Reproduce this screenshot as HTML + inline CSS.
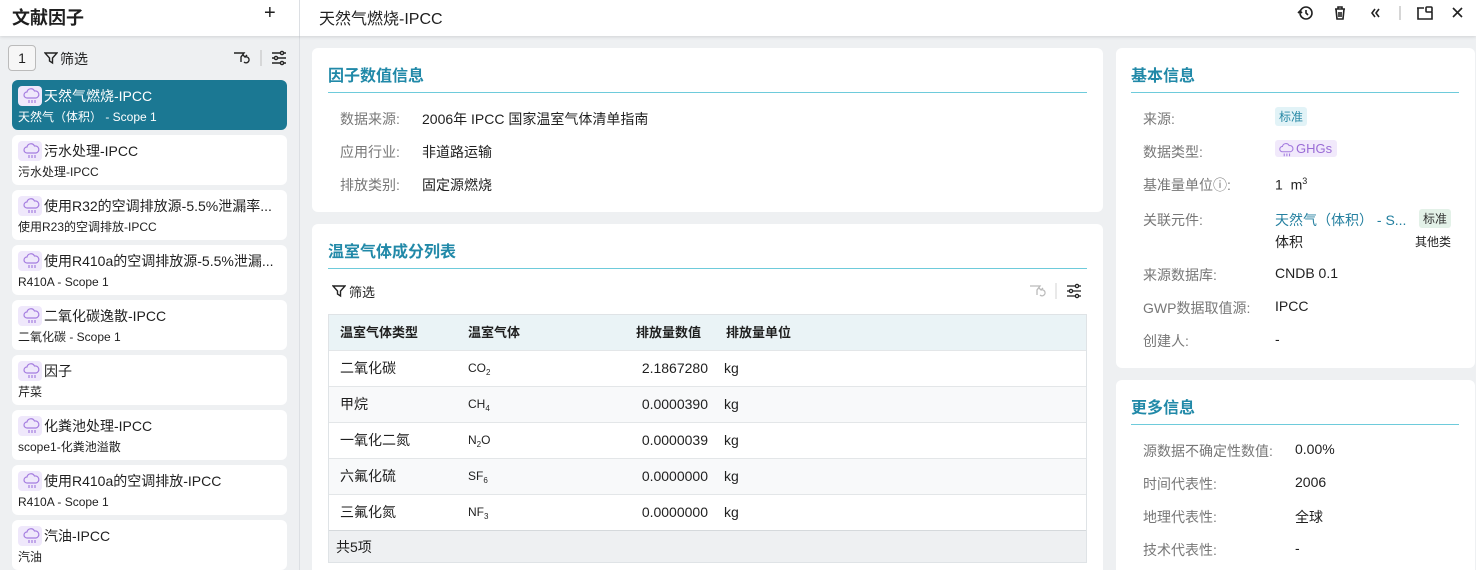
<!DOCTYPE html>
<html><head><meta charset="utf-8">
<style>
*{box-sizing:border-box;margin:0;padding:0}
html,body{width:1476px;height:570px;overflow:hidden}
body{background:#eef0f2;font-family:"Liberation Sans","Noto Sans CJK SC",sans-serif;color:#1f1f1f;position:relative;font-size:14px}
.abs{position:absolute}
.top{left:0;top:0;width:1476px;height:36px;background:#fff;box-shadow:0 1px 3px rgba(0,0,0,.12);z-index:2}
.side{left:0;top:0;width:300px;height:570px;background:#eef0f2;border-right:1px solid #dcdfe3}
.item{position:absolute;left:12px;width:275px;height:50px;background:#fff;border-radius:6px}
.item.sel{background:#1b7893;color:#fff}
.ic{position:absolute;left:6px;top:6px;width:24px;height:20px;background:#efe8fb;border-radius:4px}
.item .t{position:absolute;left:32px;top:6px;font-size:14px;white-space:nowrap;line-height:20px}
.item .s{position:absolute;left:6px;top:28px;font-size:12px;line-height:18px;white-space:nowrap}
.card{position:absolute;background:#fff;border-radius:6px}
.h{position:absolute;font-size:16px;font-weight:bold;color:#2189a8}
.line{position:absolute;height:1px;background:#6ecbdb}
.lab{position:absolute;color:#777;font-size:14px;white-space:nowrap}
.val{position:absolute;color:#1f1f1f;font-size:14px;white-space:nowrap}
.tb{position:absolute;left:328px;top:314px;width:759px;border:1px solid #dfe3e6;overflow:hidden}
.row{position:absolute;left:0;width:757px;height:36px;border-top:1px solid #e3e6e8;font-size:14px}
.row span{position:absolute;top:0;height:35px;line-height:35px;white-space:nowrap}
.f{font-size:12px}
sub{font-size:8px;vertical-align:-3px;line-height:0}
</style></head><body>
<div class="abs side"></div>
<div class="abs top"></div>
<div class="abs" style="left:299px;top:0;width:1px;height:36px;background:#dcdfe3;z-index:3"></div>
<div class="abs" style="left:12px;top:4px;font-size:18px;font-weight:bold;z-index:3">文献因子</div>
<div class="abs" style="left:264px;top:2px;font-size:20px;z-index:3">+</div>
<div class="abs" style="left:319px;top:5px;font-size:16px;z-index:3">天然气燃烧-IPCC</div>
<svg class="abs" style="left:1290px;top:0;z-index:3" width="180" height="28" viewBox="0 0 180 28" fill="none" stroke="#222" stroke-width="1.6">
<circle cx="16" cy="13" r="6"/><path d="M16 10v3l2 2M8 13l2 -2 2 2" />
<path d="M45 9h10M48 9V7h4v2M46 9l1 10h6l1-10M49 12v5M51 12v5"/>
<path d="M85 9l-3 4 3 4M89 9l-3 4 3 4"/>
<path d="M110 6v14" stroke="#ccc"/>
<path d="M127 8h7M142 12v7h-14v-11" /><rect x="136" y="7" width="6" height="5" rx="1"/>
<path d="M163 8l9 9M172 8l-9 9"/>
</svg>
<div class="abs" style="left:8px;top:45px;width:28px;height:26px;border:1px solid #bbb;border-radius:4px;background:#f6f6f6;text-align:center;line-height:24px;font-size:14px">1</div>
<svg class="abs" style="left:44px;top:51px" width="14" height="14" viewBox="0 0 14 14" fill="none" stroke="#222" stroke-width="1.4"><path d="M1 2h12l-4.5 5v5l-3-2V7z"/></svg>
<div class="abs" style="left:60px;top:49px;font-size:14px">筛选</div>
<svg class="abs" style="left:232px;top:49px" width="60" height="18" viewBox="0 0 60 18" fill="none" stroke="#222" stroke-width="1.4"><path d="M2 4h10l-3 4v5M13 8a3 3 0 1 1 -1 5M11 6l2 2 2-2"/><path d="M29 1v16" stroke="#ccc"/><path d="M40 4h14M40 9h14M40 14h14"/><circle cx="50" cy="4" r="1.6" fill="#fff"/><circle cx="44" cy="9" r="1.6" fill="#fff"/><circle cx="50" cy="14" r="1.6" fill="#fff"/></svg>
<div class="item sel" style="top:80px"><div class="ic"></div><div class="t">天然气燃烧-IPCC</div><div class="s">天然气（体积） - Scope 1</div></div>
<div class="item" style="top:135px"><div class="ic"></div><div class="t">污水处理-IPCC</div><div class="s">污水处理-IPCC</div></div>
<div class="item" style="top:190px"><div class="ic"></div><div class="t">使用R32的空调排放源-5.5%泄漏率...</div><div class="s">使用R23的空调排放-IPCC</div></div>
<div class="item" style="top:245px"><div class="ic"></div><div class="t">使用R410a的空调排放源-5.5%泄漏...</div><div class="s">R410A - Scope 1</div></div>
<div class="item" style="top:300px"><div class="ic"></div><div class="t">二氧化碳逸散-IPCC</div><div class="s">二氧化碳 - Scope 1</div></div>
<div class="item" style="top:355px"><div class="ic"></div><div class="t">因子</div><div class="s">芹菜</div></div>
<div class="item" style="top:410px"><div class="ic"></div><div class="t">化粪池处理-IPCC</div><div class="s">scope1-化粪池溢散</div></div>
<div class="item" style="top:465px"><div class="ic"></div><div class="t">使用R410a的空调排放-IPCC</div><div class="s">R410A - Scope 1</div></div>
<div class="item" style="top:520px"><div class="ic"></div><div class="t">汽油-IPCC</div><div class="s">汽油</div></div>
<div class="card" style="left:312px;top:48px;width:791px;height:164px"></div>
<div class="h" style="left:328px;top:62px">因子数值信息</div>
<div class="line" style="left:328px;top:92px;width:759px"></div>
<div class="lab" style="left:340px;top:109px">数据来源:</div><div class="val" style="left:422px;top:109px">2006年 IPCC 国家温室气体清单指南</div>
<div class="lab" style="left:340px;top:142px">应用行业:</div><div class="val" style="left:422px;top:142px">非道路运输</div>
<div class="lab" style="left:340px;top:175px">排放类别:</div><div class="val" style="left:422px;top:175px">固定源燃烧</div>
<div class="card" style="left:312px;top:224px;width:791px;height:346px;border-radius:6px 6px 0 0"></div>
<div class="h" style="left:328px;top:238px">温室气体成分列表</div>
<div class="line" style="left:328px;top:268px;width:759px"></div>
<svg class="abs" style="left:332px;top:284px" width="14" height="14" viewBox="0 0 14 14" fill="none" stroke="#222" stroke-width="1.4"><path d="M1 2h12l-4.5 5v5l-3-2V7z"/></svg>
<div class="abs" style="left:349px;top:282px;font-size:13px">筛选</div>
<svg class="abs" style="left:1028px;top:282px" width="60" height="18" viewBox="0 0 60 18" fill="none" stroke="#bbb" stroke-width="1.3"><path d="M2 4h10l-3 4v5M13 8a3 3 0 1 1 -1 5M11 6l2 2 2-2"/><path d="M28 1v16" stroke="#ddd"/><path d="M39 4h14M39 9h14M39 14h14" stroke="#222"/><circle cx="49" cy="4" r="1.6" fill="#fff" stroke="#222"/><circle cx="43" cy="9" r="1.6" fill="#fff" stroke="#222"/><circle cx="49" cy="14" r="1.6" fill="#fff" stroke="#222"/></svg>
<div class="tb" style="height:249px">
<div class="row" style="top:0;background:#eaf3f6;border-top:none;font-weight:bold;font-size:13px"><span style="left:11px">温室气体类型</span><span style="left:139px">温室气体</span><span style="left:307px">排放量数值</span><span style="left:397px">排放量单位</span></div>
<div class="row" style="top:35px"><span style="left:11px">二氧化碳</span><span class="f" style="left:139px">CO<sub>2</sub></span><span style="right:378px">2.1867280</span><span style="left:395px">kg</span></div>
<div class="row" style="top:71px;background:#f8f9fa"><span style="left:11px">甲烷</span><span class="f" style="left:139px">CH<sub>4</sub></span><span style="right:378px">0.0000390</span><span style="left:395px">kg</span></div>
<div class="row" style="top:107px"><span style="left:11px">一氧化二氮</span><span class="f" style="left:139px">N<sub>2</sub>O</span><span style="right:378px">0.0000039</span><span style="left:395px">kg</span></div>
<div class="row" style="top:143px;background:#f8f9fa"><span style="left:11px">六氟化硫</span><span class="f" style="left:139px">SF<sub>6</sub></span><span style="right:378px">0.0000000</span><span style="left:395px">kg</span></div>
<div class="row" style="top:179px"><span style="left:11px">三氟化氮</span><span class="f" style="left:139px">NF<sub>3</sub></span><span style="right:378px">0.0000000</span><span style="left:395px">kg</span></div>
<div class="row" style="top:215px;height:33px;background:#eef0f2;border-top:1px solid #d5d9dc"><span style="left:7px;height:33px;line-height:33px">共5项</span></div>
</div>
<div class="card" style="left:1116px;top:48px;width:359px;height:320px"></div>
<div class="h" style="left:1131px;top:62px">基本信息</div>
<div class="line" style="left:1131px;top:92px;width:328px"></div>
<div class="lab" style="left:1143px;top:109px">来源:</div><div class="abs" style="left:1275px;top:107px;background:#e2f3f7;color:#2a8aa6;font-size:12px;padding:1px 4px;border-radius:3px">标准</div>
<div class="lab" style="left:1143px;top:142px">数据类型:</div><div class="abs" style="left:1275px;top:140px;background:#f1e9fb;color:#9a6cd6;font-size:13px;padding:1px 5px 1px 21px;border-radius:3px">GHGs</div>
<div class="lab" style="left:1143px;top:175px">基准量单位ⓘ:</div><div class="val" style="left:1275px;top:176px">1&nbsp; m<sup style="font-size:9px">3</sup></div>
<div class="lab" style="left:1143px;top:210px">关联元件:</div><div class="val" style="left:1275px;top:210px;color:#2580a0">天然气（体积） - S...</div>
<div class="abs" style="left:1419px;top:209px;background:#e3f1e8;color:#333;font-size:12px;padding:1px 4px;border-radius:3px">标准</div>
<div class="val" style="left:1275px;top:232px">体积</div><div class="abs" style="left:1415px;top:233px;font-size:12px">其他类</div>
<div class="lab" style="left:1143px;top:265px">来源数据库:</div><div class="val" style="left:1275px;top:265px">CNDB 0.1</div>
<div class="lab" style="left:1143px;top:298px">GWP数据取值源:</div><div class="val" style="left:1275px;top:298px">IPCC</div>
<div class="lab" style="left:1143px;top:331px">创建人:</div><div class="val" style="left:1275px;top:331px">-</div>
<div class="card" style="left:1116px;top:380px;width:359px;height:190px;border-radius:6px 6px 0 0"></div>
<div class="h" style="left:1131px;top:394px">更多信息</div>
<div class="line" style="left:1131px;top:424px;width:328px"></div>
<div class="lab" style="left:1143px;top:441px">源数据不确定性数值:</div><div class="val" style="left:1295px;top:441px">0.00%</div>
<div class="lab" style="left:1143px;top:474px">时间代表性:</div><div class="val" style="left:1295px;top:474px">2006</div>
<div class="lab" style="left:1143px;top:507px">地理代表性:</div><div class="val" style="left:1295px;top:507px">全球</div>
<div class="lab" style="left:1143px;top:540px">技术代表性:</div><div class="val" style="left:1295px;top:540px">-</div>
<svg width="0" height="0" style="position:absolute"><defs><g id="cl" fill="none" stroke="#a57de0" stroke-width="1.2"><path d="M5 11a3 3 0 0 1 0-6 4 4 0 0 1 7.5-1 3 3 0 0 1 1.5 7z"/><path d="M7 13v3M10 13v3M13 13v3"/></g></defs></svg>
<svg class="abs" style="left:22px;top:87px" width="18" height="18" viewBox="0 0 18 18"><use href="#cl"/></svg>
<svg class="abs" style="left:22px;top:142px" width="18" height="18" viewBox="0 0 18 18"><use href="#cl"/></svg>
<svg class="abs" style="left:22px;top:197px" width="18" height="18" viewBox="0 0 18 18"><use href="#cl"/></svg>
<svg class="abs" style="left:22px;top:252px" width="18" height="18" viewBox="0 0 18 18"><use href="#cl"/></svg>
<svg class="abs" style="left:22px;top:307px" width="18" height="18" viewBox="0 0 18 18"><use href="#cl"/></svg>
<svg class="abs" style="left:22px;top:362px" width="18" height="18" viewBox="0 0 18 18"><use href="#cl"/></svg>
<svg class="abs" style="left:22px;top:417px" width="18" height="18" viewBox="0 0 18 18"><use href="#cl"/></svg>
<svg class="abs" style="left:22px;top:472px" width="18" height="18" viewBox="0 0 18 18"><use href="#cl"/></svg>
<svg class="abs" style="left:22px;top:527px" width="18" height="18" viewBox="0 0 18 18"><use href="#cl"/></svg>
<svg class="abs" style="left:1278px;top:142px" width="16" height="16" viewBox="0 0 18 18"><use href="#cl"/></svg>
</body></html>
